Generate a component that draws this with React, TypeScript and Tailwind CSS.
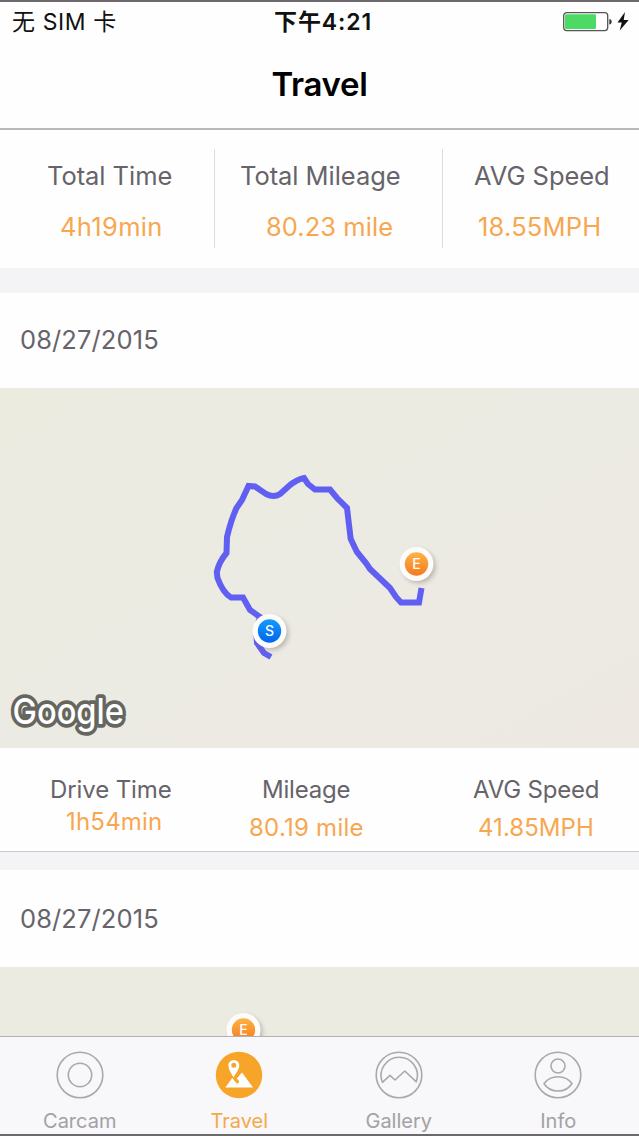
interface Stat {
  label: string;
  value: string;
  col: string;
  labelClass: string;
  valueClass: string;
}

const TOTALS: Stat[] = [
  { label: "Total Time",    value: "4h19min",    col: "w-[214px]", labelClass: "pl-[47px]", valueClass: "pl-[60px] tracking-[0.35px]" },
  { label: "Total Mileage", value: "80.23 mile", col: "w-[228px]", labelClass: "pl-[25px]", valueClass: "pl-[51px] tracking-[0.05px]" },
  { label: "AVG Speed",     value: "18.55MPH",   col: "flex-1",    labelClass: "pl-[31px]", valueClass: "pl-[35px] tracking-[0.2px]" },
];

const TRIP: Stat[] = [
  { label: "Drive Time", value: "1h54min",    col: "w-[214px]", labelClass: "pl-[50px] tracking-[-0.1px]", valueClass: "pl-[66px] tracking-[0.2px]" },
  { label: "Mileage",    value: "80.19 mile", col: "w-[228px]", labelClass: "pl-[48px] tracking-[-0.2px]", valueClass: "pl-[35px] pt-1.5 tracking-[0.25px]" },
  { label: "AVG Speed",  value: "41.85MPH",   col: "flex-1",    labelClass: "pl-[31px] tracking-[-0.2px]", valueClass: "pl-[36px] pt-1.5 tracking-[0.05px]" },
];

function StatusBar() {
  return (
    <div className="relative flex h-10 justify-between border-t-2 border-[#6c686c] pl-3 pr-2 text-[23px] leading-[40px] text-[#111]">
      <span className="tracking-[0.6px]">无 SIM 卡</span>
      <span className="absolute left-[274px] font-semibold tracking-[0.9px]">下午4:21</span>
      <svg className="mt-2" width="70" height="24" viewBox="0 0 70 24">
        <rect x="2.7" y="2.6" width="44" height="18" rx="3" fill="#fff" stroke="#555" strokeWidth="1.3" />
        <rect x="4" y="4.3" width="31" height="14.6" rx="1.2" fill="#4cd964" />
        <path d="M48.3 9q2.4.2 2.4 2.8t-2.4 2.8z" fill="#333" />
        <path d="M64 2 56.5 12.5h4.3L58.7 20.4 67.7 10h-5z" fill="#111" />
      </svg>
    </div>
  );
}

function DateRow({ date, className }: { date: string; className: string }) {
  return <div className={`flex items-center bg-[#fefefe] pl-5 text-[25.5px] tracking-[0.1px] text-[#66646a] ${className}`}>{date}</div>;
}

function Marker({ x, y, letter }: { x: number; y: number; letter: "S" | "E" }) {
  return (
    <g transform={`translate(${x} ${y})`}>
      <circle cx="2.5" cy="2.5" r="16.5" fill="#77726a" opacity="0.45" filter="url(#soft)" />
      <circle r="17" fill="#fdfcfb" />
      <circle r="11.7" fill={letter === "S" ? "url(#start)" : "url(#end)"} />
      <text y="5" textAnchor="middle" fontSize="14" fontWeight="500" fill="#fff">{letter}</text>
    </g>
  );
}

function MapDefs() {
  return (
    <defs>
      <linearGradient id="start" x1="0" y1="0" x2="0" y2="1">
        <stop offset="0" stopColor="#129bff" />
        <stop offset="1" stopColor="#0265ee" />
      </linearGradient>
      <linearGradient id="end" x1="0" y1="0" x2="0" y2="1">
        <stop offset="0" stopColor="#fdb445" />
        <stop offset="1" stopColor="#f47a20" />
      </linearGradient>
      <filter id="soft" x="-50%" y="-50%" width="200%" height="200%">
        <feGaussianBlur stdDeviation="2.5" />
      </filter>
    </defs>
  );
}

function TripMap() {
  return (
    <svg className="block h-[360px] w-full shrink-0 bg-linear-to-br from-[#ebebe0] via-[#ecebe3] to-[#ede9e2]" viewBox="0 0 639 360">
      <MapDefs />
      <path
        d="M271 269 264 265 257 255 256 243 260 229 250 222 243 209.500 231 209.500Q223 205 217.500 190L216.800 184Q219 174 226.500 165L227 149Q231 132 236.500 120L242 112 248.500 98 255 98.500 266 106Q274 110 280 106L290 97 Q298 91 304 90L308 96 315 101.500 330 101.500 337 110 347 120 350.700 151 357 164 366 175 370 181 390 200 396 209 401 214.500 419 214.500 421.500 200"
        fill="none"
        stroke="#615ff1"
        strokeWidth="6"
      />
      <Marker x={269.500} y={243} letter="S" />
      <Marker x={416.500} y={176} letter="E" />
      <text
        x="12.500"
        y="336"
        fontSize="36"
        fontWeight="500"
        textLength="111.500"
        lengthAdjust="spacingAndGlyphs"
        fill="#fff"
        stroke="#666660"
        strokeWidth="7.500"
        strokeLinejoin="round"
        paintOrder="stroke"
      >
        Google
      </text>
    </svg>
  );
}

const TABS = [
  {
    label: "Carcam",
    active: false,
    icon: (
      <>
        <circle cx="24" cy="24" r="22.800" />
        <circle cx="24" cy="24" r="11.700" />
      </>
    ),
  },
  {
    label: "Travel",
    active: true,
    icon: (
      <>
        <circle cx="24" cy="24" r="23.200" fill="#f7a528" stroke="none" />
        <path
          d="M18.500 26.500C16.500 22.500 13.300 18.500 13.300 14.400a5.500 5.500 0 0 1 11 0C24.300 18.500 20.500 22.500 18.500 26.500ZM18.800 11.800a2.500 2.500 0 1 0 0 5 2.500 2.500 0 0 0 0-5Z"
          fill="#fff"
          fillRule="evenodd"
          stroke="none"
        />
        <path d="M10.300 36.500 17.300 27 20 30.500 22.500 33 24.500 30.500 21.800 27.500 27 21.500 38 36.500Z" fill="#fff" stroke="none" />
      </>
    ),
  },
  {
    label: "Gallery",
    active: false,
    icon: (
      <>
        <circle cx="24" cy="24" r="22.800" />
        <path d="M7.400 31.300A18.200 18.200 0 1 1 41.300 30.800L29.800 20 20 29 15 24.300Z" />
      </>
    ),
  },
  {
    label: "Info",
    active: false,
    icon: (
      <>
        <circle cx="24" cy="24" r="22.800" />
        <circle cx="24" cy="15" r="7" />
        <path d="M10 32.500C17 23.500 31 23.500 38 32.500 32 42.500 16 42.500 10 32.500Z" />
      </>
    ),
  },
];

function TabBar() {
  return (
    <nav className="flex h-[100px] shrink-0 border-t border-b-2 border-t-[#b3b2b2] border-b-[#6c696c] bg-[#f8f7f9] pr-px">
      {TABS.map((tab) => (
        <button key={tab.label} className="flex flex-1 flex-col items-center pt-3.5">
          <svg width="48" height="48" viewBox="0 0 48 48" fill="none" stroke="#aaa8aa" strokeWidth="1.6" strokeLinejoin="round">
            {tab.icon}
          </svg>
          <span className={`mt-2.5 text-[20px] leading-[24px] ${tab.active ? "text-[#f5a94b]" : "text-[#a3a1a4]"}`}>{tab.label}</span>
        </button>
      ))}
    </nav>
  );
}

export default function App() {
  return (
    <div className="flex h-[1136px] w-[639px] flex-col overflow-hidden bg-[#fefefe] font-[Inter,'Noto_Sans_CJK_SC',sans-serif]">
      <header className="h-[130px] shrink-0 border-b-2 border-[#b9b8b9]">
        <StatusBar />
        <h1 className="pt-6 text-center text-[33px] font-semibold leading-[40px] tracking-[-0.3px] text-black">Travel</h1>
      </header>

      {/* Totals */}
      <section className="flex h-[138px] shrink-0 pt-[19px]">
        {TOTALS.map((s) => (
          <div key={s.label} className={`h-[99px] shrink-0 whitespace-nowrap border-l border-[#dedcde] pt-[11px] text-[25.5px] leading-[32px] first:border-l-0 ${s.col}`}>
            <div className={`tracking-[-0.05px] text-[#66646a] ${s.labelClass}`}>{s.label}</div>
            <div className={`mt-[19px] text-[#f7a750] ${s.valueClass}`}>{s.value}</div>
          </div>
        ))}
      </section>
      <div className="h-[25px] shrink-0 bg-[#f4f3f6]" />

      <DateRow date="08/27/2015" className="h-[95px] shrink-0" />
      <TripMap />
      <section className="flex h-[104px] shrink-0 border-b border-[#cbc9cc] pt-[26px]">
        {TRIP.map((s) => (
          <div key={s.label} className={`shrink-0 whitespace-nowrap text-[24px] leading-[32px] ${s.col}`}>
            <div className={`text-[#66646a] ${s.labelClass}`}>{s.label}</div>
            <div className={`text-[#f7a750] ${s.valueClass}`}>{s.value}</div>
          </div>
        ))}
      </section>
      <div className="h-[18px] shrink-0 bg-[#f4f3f6]" />

      <DateRow date="08/27/2015" className="h-[97px] shrink-0 pt-px" />
      <svg className="block h-[69px] w-full shrink-0 bg-[#ecebe2]" viewBox="0 0 639 69">
        <Marker x={243.500} y={63} letter="E" />
      </svg>
      <TabBar />
    </div>
  );
}
